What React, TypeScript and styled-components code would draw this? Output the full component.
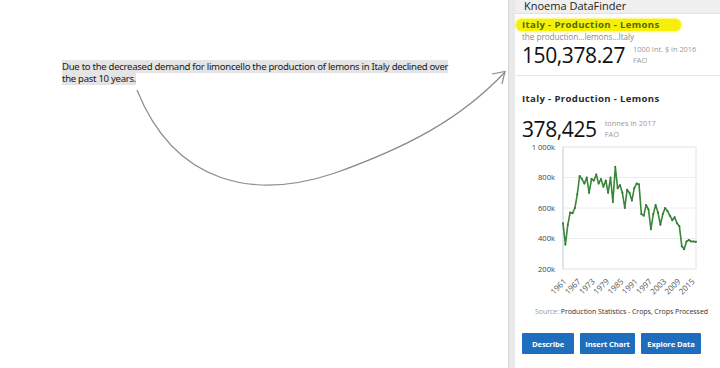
import React from "react";
import styled, { createGlobalStyle } from "styled-components";

const Global = createGlobalStyle`
  html, body { margin: 0; padding: 0; background: #fff; }
  body { width: 720px; height: 368px; overflow: hidden; }
`;

const Page = styled.div`
  display: flex;
  width: 720px;
  height: 368px;
  overflow: hidden;
  font-family: "Open Sans", "Noto Sans", sans-serif;
`;

const DocArea = styled.div`
  position: relative;
  width: 508px;
  flex: none;
  background: #fff;
  padding: 61px 0 0 62px;
  box-sizing: border-box;
`;

const Paragraph = styled.p`
  margin: 0;
  font-family: "Noto Sans", sans-serif;
  font-size: 9.6px;
  line-height: 12px;
  letter-spacing: -0.3px;
  white-space: nowrap;
  color: #1a1a1a;
`;

const Selected = styled.span`
  background: #e4e4e4;
`;

const ArrowSvg = styled.svg`
  position: absolute;
  left: 0;
  top: 0;
`;

const Divider = styled.div`
  width: 6px;
  flex: none;
  background: #e9e9e9;
  border-left: 1px solid #d6d6d6;
`;

const Panel = styled.div`
  flex: 1;
  display: flex;
  flex-direction: column;
  background: #fff;
  min-width: 0;
`;

const Header = styled.div`
  height: 14px;
  flex: none;
  background: #efefef;
  border-bottom: 1px solid #e2e2e2;
  padding-left: 9px;
  font-size: 11px;
  line-height: 11px;
  color: #222;
  overflow: hidden;
  box-sizing: border-box;
`;

const Card = styled.section<{ $divider?: boolean }>`
  padding: 0 0 0 7px;
  border-bottom: ${(p) => (p.$divider ? "1px solid #e6e6e6" : "none")};
`;

const HighlightTitle = styled.div`
  position: relative;
  margin-top: 5px;
  height: 12px;
  display: flex;
  align-items: center;
`;

const Marker = styled.span`
  position: absolute;
  left: -6px;
  top: 0;
  width: 165px;
  height: 12px;
  border-radius: 7px;
  background: #f6ef0a;
  box-shadow: 0 0 2px 1px rgba(246, 239, 10, 0.6);
`;

const Title = styled.div<{ $color?: string; $mt?: number }>`
  position: relative;
  margin-top: ${(p) => p.$mt ?? 0}px;
  font-size: 9.6px;
  font-weight: 700;
  letter-spacing: 0.35px;
  color: ${(p) => p.$color ?? "#2b2b2b"};
  line-height: 12px;
  white-space: nowrap;
`;

const Sub = styled.div`
  font-size: 8.3px;
  line-height: 10px;
  color: #8a8a8a;
  margin-top: 1px;
  letter-spacing: -0.1px;
`;

const ValueRow = styled.div<{ $mt: number; $mb?: number }>`
  display: flex;
  align-items: flex-start;
  gap: 8px;
  margin-top: ${(p) => p.$mt}px;
  margin-bottom: ${(p) => p.$mb ?? 0}px;
`;

const BigValue = styled.div`
  font-size: 21px;
  line-height: 20px;
  padding-top: 1px;
  color: #111;
  letter-spacing: -0.4px;
`;

const Meta = styled.div`
  font-size: 7.4px;
  line-height: 10.5px;
  color: #9a9a9a;
`;

const Source = styled.div`
  text-align: right;
  padding-right: 12px;
  margin-top: 8px;
  font-size: 7px;
  line-height: 10px;
  color: #333;
  letter-spacing: -0.05px;
`;

const SourceLabel = styled.span`
  color: #9a9a9a;
`;

const Buttons = styled.div`
  display: flex;
  gap: 6px;
  margin: 16px 0 0 7px;
`;

const Button = styled.button<{ $w: number }>`
  width: ${(p) => p.$w}px;
  height: 21px;
  border: none;
  border-radius: 1px;
  background: #1f6dbd;
  color: #fff;
  font-family: "Open Sans", "Noto Sans", sans-serif;
  font-size: 7.6px;
  font-weight: 700;
  padding: 0;
  letter-spacing: -0.1px;
`;

const ChartSvg = styled.svg`
  display: block;
`;

const values: number[] = [
  500, 360, 490, 570, 565, 600, 690, 810, 790, 760, 800, 700, 790, 780, 820,
  760, 790, 740, 780, 700, 800, 640, 870, 730, 750, 700, 600, 720, 700, 650,
  730, 760, 755, 560, 550, 620, 590, 460, 560, 620, 570, 490, 560, 600, 580,
  550, 520, 540, 500, 480, 350, 330, 380, 390, 380, 380, 378,
];

const PX0 = 48;
const PX1 = 181;
const PY0 = 8;
const PY1 = 130;
const yOf = (v: number) => PY1 - ((v - 200) / 800) * (PY1 - PY0);
const xOf = (i: number) => PX0 + (i / (values.length - 1)) * (PX1 - PX0);

function Chart() {
  const pts = values.map((v, i) => `${xOf(i).toFixed(1)},${yOf(v).toFixed(1)}`).join(" ");
  const ticks = [1000, 800, 600, 400, 200];
  const years = [1961, 1967, 1973, 1979, 1985, 1991, 1997, 2003, 2009, 2015];
  return (
    <ChartSvg width={205} height={160} viewBox="0 0 205 160">
      <rect x={PX0} y={PY0} width={PX1 - PX0} height={PY1 - PY0} fill="#fff" stroke="#e3e3e3" strokeWidth={1} />
      {ticks.map((t) => (
        <g key={t}>
          {t !== 1000 && t !== 200 && (
            <line x1={PX0} x2={PX1} y1={yOf(t)} y2={yOf(t)} stroke="#ececec" strokeWidth={1} />
          )}
          <text
            x={40}
            y={yOf(t) + 2.8}
            textAnchor="end"
            fontSize={7.6}
            fill="#444"
            fontFamily="Open Sans, Noto Sans, sans-serif"
          >
            {t === 1000 ? "1 000k" : `${t}k`}
          </text>
        </g>
      ))}
      <line x1={PX0} x2={PX0} y1={PY0} y2={PY1} stroke="#cfd6e4" strokeWidth={1} />
      <polyline points={pts} fill="none" stroke="#3a863a" strokeWidth={1.6} strokeLinejoin="round" />
      {values.map((v, i) => (
        <circle key={i} cx={xOf(i)} cy={yOf(v)} r={1} fill="#2f7a2f" />
      ))}
      {years.map((y) => {
        const i = y - 1961;
        const x = xOf(i) + 4;
        const yy = PY1 + 13;
        return (
          <text
            key={y}
            x={x}
            y={yy}
            textAnchor="end"
            fontSize={8}
            fill="#555"
            fontFamily="Open Sans, Noto Sans, sans-serif"
            transform={`rotate(-45 ${x} ${yy})`}
          >
            {y}
          </text>
        );
      })}
    </ChartSvg>
  );
}

export default function App() {
  return (
    <Page>
      <Global />
      <DocArea>
        <Paragraph>
          <Selected>
            Due to the decreased demand for limoncello the production of lemons in Italy declined over
          </Selected>
          <br />
          <Selected>the past 10 years.</Selected>
        </Paragraph>
        <ArrowSvg width={508} height={368} viewBox="0 0 508 368">
          <path
            d="M137 90 C 175 185, 255 200, 335 173 C 405 148, 460 120, 505 72"
            fill="none"
            stroke="#8a8a8a"
            strokeWidth={1.2}
          />
          <path d="M492 74 L505 71.5 L502 84" fill="none" stroke="#8a8a8a" strokeWidth={1.2} />
        </ArrowSvg>
      </DocArea>
      <Divider />
      <Panel>
        <Header>Knoema DataFinder</Header>
        <Card $divider>
          <HighlightTitle>
            <Marker />
            <Title $color="#4d6b00">Italy - Production - Lemons</Title>
          </HighlightTitle>
          <Sub>the production...lemons...Italy</Sub>
          <ValueRow $mt={2} $mb={10}>
            <BigValue>150,378.27</BigValue>
            <Meta>
              1000 Int. $ in 2016
              <br />
              FAO
            </Meta>
          </ValueRow>
        </Card>
        <Card>
          <Title $mt={17}>Italy - Production - Lemons</Title>
          <ValueRow $mt={13}>
            <BigValue>378,425</BigValue>
            <Meta>
              tonnes in 2017
              <br />
              FAO
            </Meta>
          </ValueRow>
        </Card>
        <Chart />
        <Source>
          <SourceLabel>Source: </SourceLabel>Production Statistics - Crops, Crops Processed
        </Source>
        <Buttons>
          <Button $w={52}>Describe</Button>
          <Button $w={55}>Insert Chart</Button>
          <Button $w={60}>Explore Data</Button>
        </Buttons>
      </Panel>
    </Page>
  );
}
